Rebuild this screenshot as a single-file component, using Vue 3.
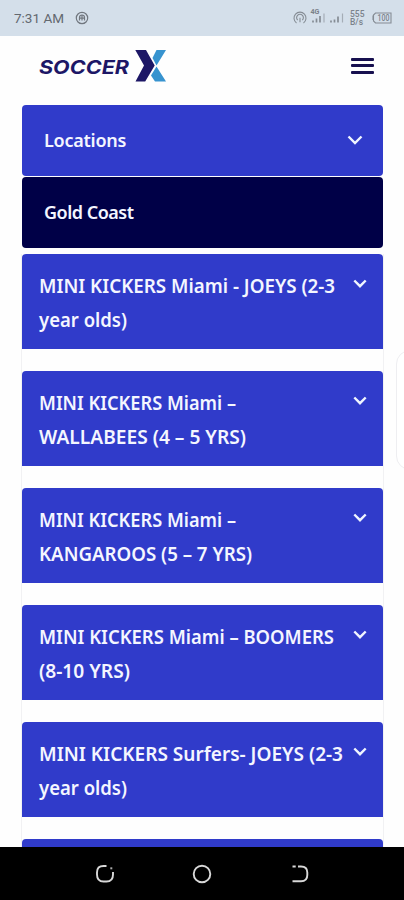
<script setup>
const sessions = [
  [{ text: 'MINI KICKERS Miami - JOEYS (2-3', width: 296 }, { text: 'year olds)', width: 88 }],
  [{ text: 'MINI KICKERS Miami –', width: 197 }, { text: 'WALLABEES (4 – 5 YRS)', width: 207 }],
  [{ text: 'MINI KICKERS Miami –', width: 197 }, { text: 'KANGAROOS (5 – 7 YRS)', width: 213 }],
  [{ text: 'MINI KICKERS Miami – BOOMERS', width: 295 }, { text: '(8-10 YRS)', width: 91 }],
  [{ text: 'MINI KICKERS Surfers- JOEYS (2-3', width: 304 }, { text: 'year olds)', width: 88 }],
]
</script>

<template>
  <div class="screen">
    <header class="status">
      <span class="time">7:31 AM</span>
      <svg class="badge" width="14" height="14" viewBox="0 0 14 14">
        <circle cx="7" cy="7" r="5.7" />
        <path d="M4.500 9.500V6.500a2.500 2.500 0 0 1 5 0v3M5 7.200h4M7 4v5.600" />
      </svg>
      <svg class="indicators" width="106" height="24" viewBox="0 0 106 24">
        <g class="line">
          <path d="M4.500 15.500a6 6 0 1 1 7 0M5.700 12.700a3.400 3.400 0 1 1 4.600 0M8 10.200v4.600" />
          <path class="bars" d="M21 15v-2M24.500 15v-4M28 15V8.500" />
          <path class="bars faint" d="M32 15V6M50.500 15V6" />
          <path class="bars" d="M39 15v-2M42.500 15v-3M46 15v-6" />
          <path d="M81 8v4.500M83.500 5.500h15.500v10H83.500l-2-2v-6z" />
        </g>
        <text x="18.500" y="7.500" class="tiny" textLength="9" lengthAdjust="spacingAndGlyphs">4G</text>
        <text x="58" y="10.500" class="rate" textLength="14.500" lengthAdjust="spacingAndGlyphs">555</text>
        <text x="58" y="19" class="rate" textLength="13" lengthAdjust="spacingAndGlyphs">B/s</text>
        <text x="85.500" y="14.500" class="charge" textLength="12" lengthAdjust="spacingAndGlyphs">100</text>
      </svg>
    </header>

    <div class="brandbar">
      <svg width="130" height="36" viewBox="0 0 130 36">
        <text class="wordmark" x="1" y="26" textLength="90" lengthAdjust="spacingAndGlyphs">SOCCER</text>
        <path fill="#3793cf" d="M118.500 2H128L118.500 17.500l-4-7.500zM118.500 18.500 128 33.500H117l-4-6z" />
        <path fill="#1d1766" d="M97.300 2h10.700l8.700 15.500-9.500 16H97.500l8.500-16z" />
      </svg>
      <div class="menu"><i></i><i></i><i></i></div>
    </div>

    <main>
      <div class="filter">
        <span class="place">Locations</span>
        <svg width="18" height="12" viewBox="0 0 18 12"><path d="M2.500 2.500 9 9l6.500-6.500" /></svg>
      </div>
      <div class="filter active"><span class="city">Gold Coast</span></div>
      <section class="list">
        <article v-for="(lines, i) in sessions" :key="i" class="card">
          <svg class="title" width="308" height="76" viewBox="0 0 308 76">
            <text v-for="(line, n) in lines" :key="n" x="1" :y="28.5 + n * 34" :textLength="line.width" lengthAdjust="spacingAndGlyphs">{{ line.text }}</text>
          </svg>
          <svg class="chevron" width="16" height="11" viewBox="0 0 16 11"><path d="M2.300 2.500 8 8.200l5.700-5.700" /></svg>
        </article>
        <article class="card"></article>
      </section>
    </main>

    <aside class="drawer"></aside>

    <nav class="keys">
      <svg width="22" height="22" viewBox="0 0 22 22">
        <path d="M12.500 3H9.500Q3 3 3 9.500v2Q3 18.500 9.500 18.500h3q6.500 0 6.500-7V9" />
        <path d="M16.300 4.300h2v2h-2z" class="dot" />
      </svg>
      <svg width="22" height="22" viewBox="0 0 22 22"><circle cx="11" cy="11" r="8.300" /></svg>
      <svg width="22" height="22" viewBox="0 0 22 22">
        <path d="M9 3.500h3Q18.300 3.500 18.300 9.500v2.500Q18.300 18.300 12 18.300H3.500M3.500 3.500h3.200" />
      </svg>
    </nav>
  </div>
</template>

<style>
body { overflow: hidden; background: #fff; }
</style>

<style scoped>
.screen { width: 404px; height: 900px; display: flex; flex-direction: column; overflow: hidden; background: #fefefe; position: relative; font-family: "Noto Sans", sans-serif; }
.status { height: 36px; flex: none; box-sizing: border-box; display: flex; align-items: center; padding-left: 14px; background: #d4dfea; color: #63686f; }
.time { width: 61px; font: 400 13.5px/20px Roboto, sans-serif; letter-spacing: 0; }
.badge { fill: none; stroke: #71777f; stroke-width: 1.2; }
.indicators { margin-left: 203px; fill: #7b828a; }
.line { fill: none; stroke: #858c94; stroke-width: 1.1; transform: translateY(1.5px); }
.bars { stroke-width: 1.7; }
.faint { stroke: #a5adb6; stroke-width: 1.2; }
.tiny { font: 700 7px Roboto, sans-serif; }
.rate { font: 500 9px Roboto, sans-serif; }
.charge { font: 500 9px Roboto, sans-serif; }
.brandbar { height: 68px; flex: none; box-sizing: border-box; padding: 12px 30px 0 38px; display: flex; justify-content: space-between; align-items: flex-start; }
.wordmark { font: italic 700 19px Inter, sans-serif; fill: #1d1766; }
.menu { width: 23px; padding-top: 10px; display: flex; flex-direction: column; gap: 3.300px; }
.menu i { height: 3px; background: #17104f; border-radius: 1px; }
main { flex: 1; min-height: 0; overflow: hidden; padding: 0.5px 21px 0 22px; }
.filter { height: 71px; margin-bottom: 1px; box-sizing: border-box; padding: 0 19.500px 0 22px; display: flex; justify-content: space-between; align-items: center; border-radius: 4px; background: #303bca; color: #f4f6ff; font-weight: 600; font-size: 18px; letter-spacing: -0.25px; }
.filter.active { background: #000047; }
.city { letter-spacing: -0.5px; }
.filter svg, .chevron { fill: none; stroke: #f0f5ff; stroke-width: 2.4; }
.list { margin: 6px -1px 0; border: solid #f1f1f3; border-width: 0 1px; display: flex; flex-direction: column; gap: 22px; }
.card { height: 95px; flex: none; box-sizing: border-box; padding: 10px 15.500px 0 16px; display: flex; border-radius: 4px 4px 0 0; background: #303bca; }
.title { font-weight: 600; font-size: 20.5px; fill: #f4f6ff; flex: none; overflow: visible; }
.chevron { margin: 14px 0 0 6px; flex: none; }
.drawer { position: absolute; left: 396px; top: 350px; width: 30px; height: 120px; box-sizing: border-box; border: 1.5px solid #eeeef1; border-radius: 14px; background: #fff; }
.keys { height: 53px; flex: none; display: flex; justify-content: center; align-items: center; gap: 75.500px; background: #000; }
.keys svg { fill: none; stroke: #d8d8d8; stroke-width: 1.9; }
.keys .dot { fill: #aaa; stroke: none; }
</style>
